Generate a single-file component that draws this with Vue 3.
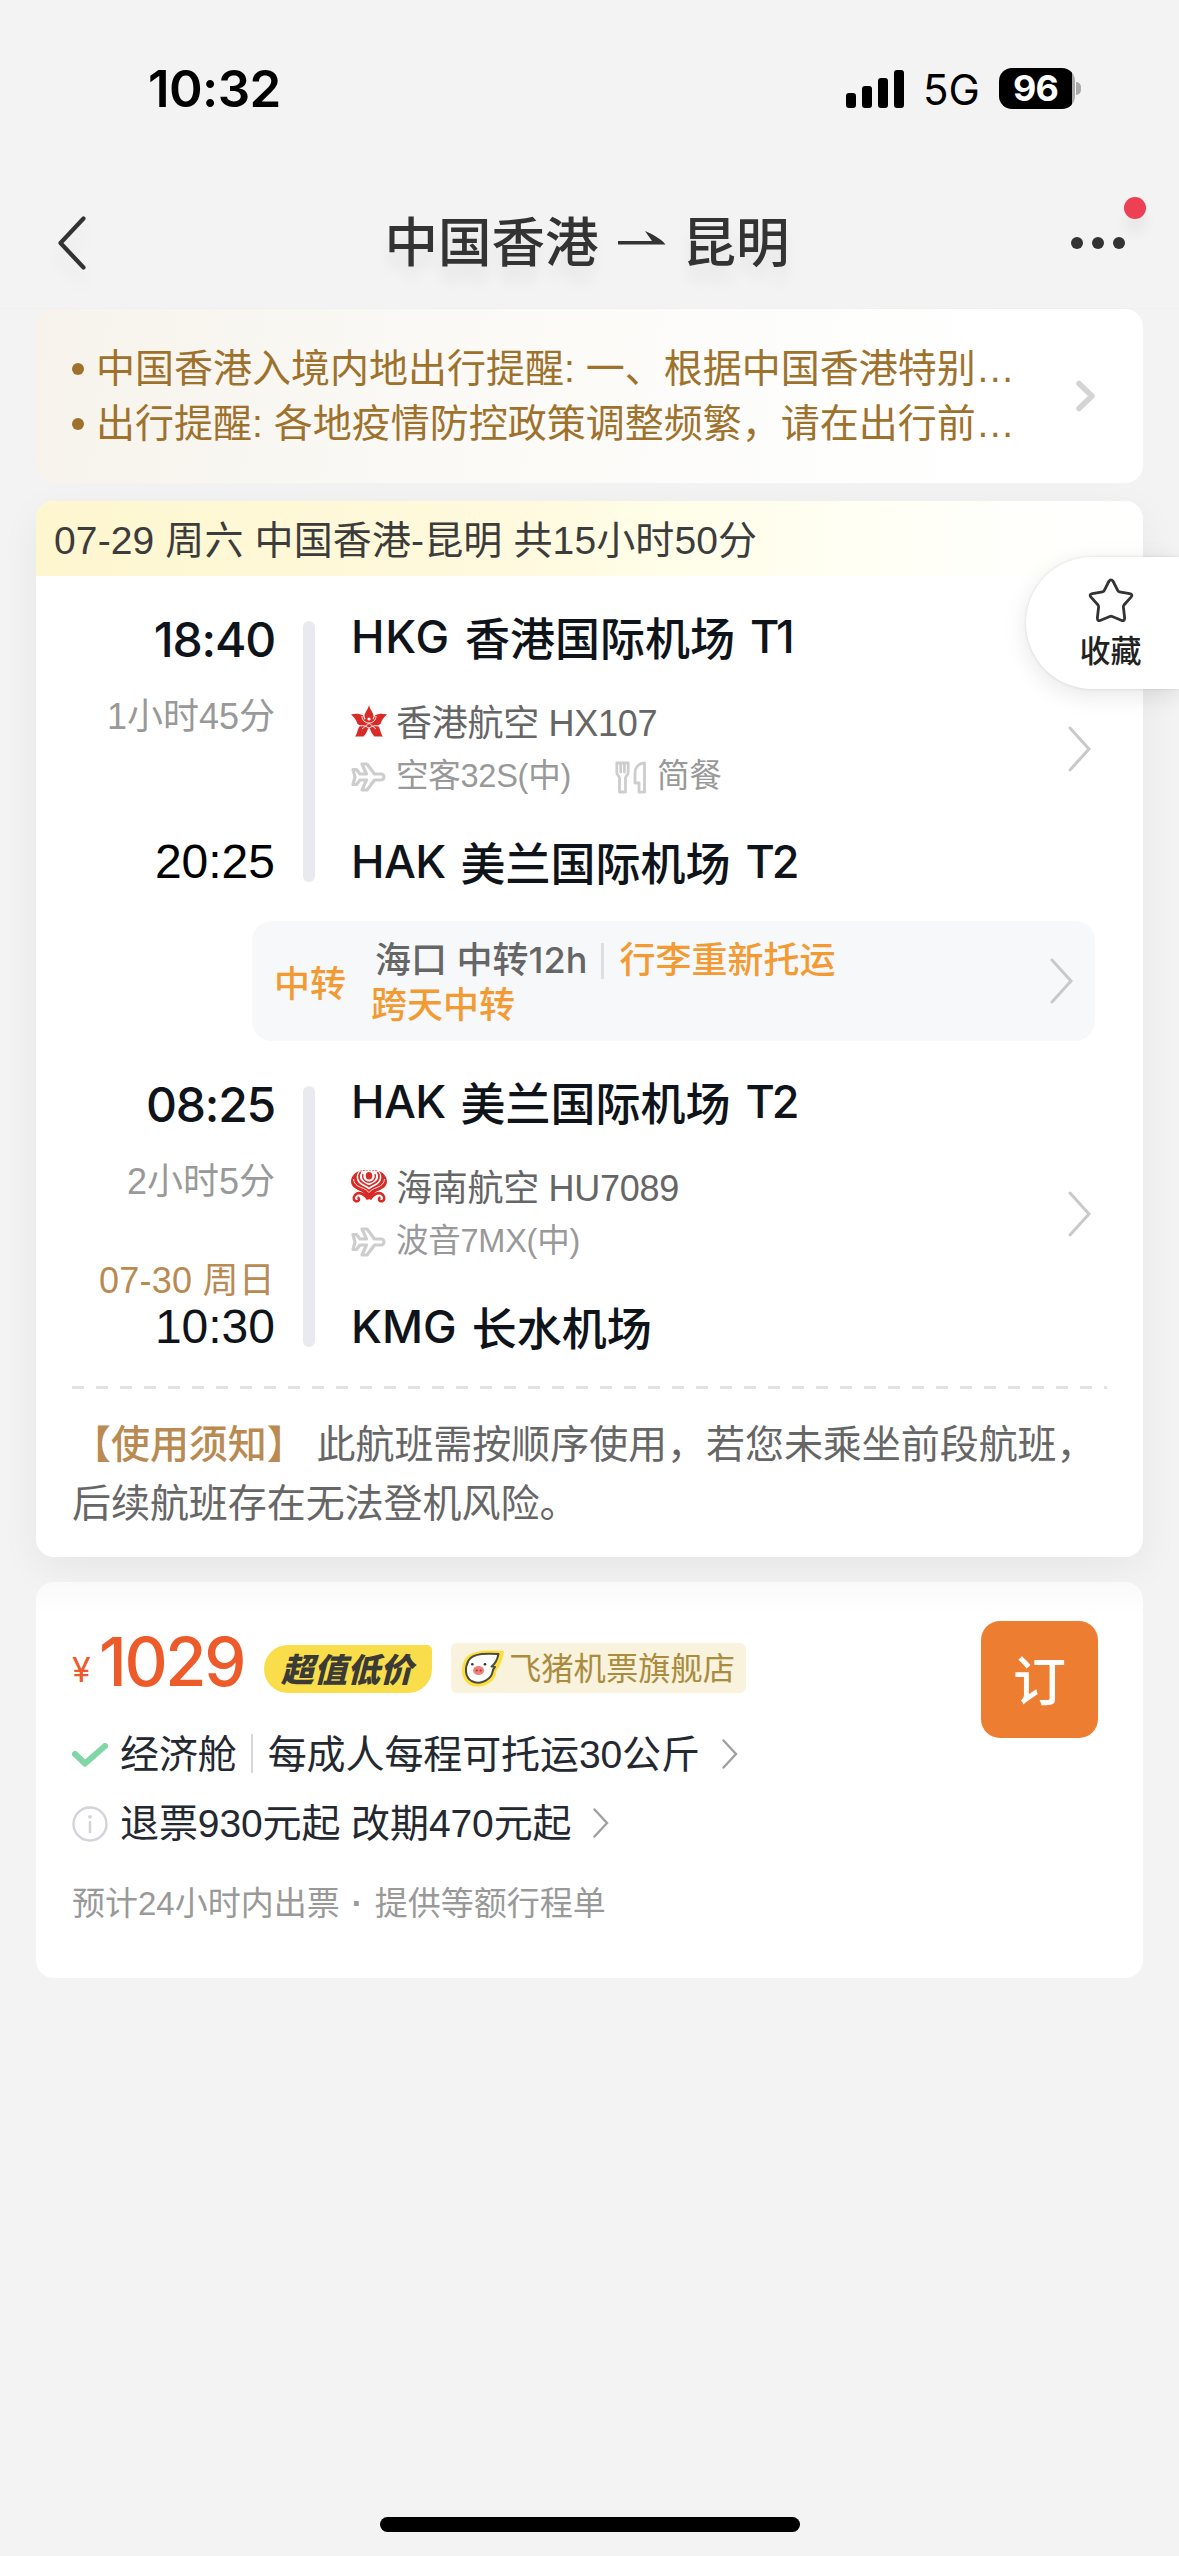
<script setup>
const notices = [
  '中国香港入境内地出行提醒: 一、根据中国香港特别…',
  '出行提醒: 各地疫情防控政策调整频繁，请在出行前…',
]

const legs = [
  {
    id: 'hx',
    depart: '18:40',
    duration: '1小时45分',
    arriveDate: '',
    arrive: '20:25',
    from: { code: 'HKG', name: '香港国际机场', terminal: 'T1' },
    to: { code: 'HAK', name: '美兰国际机场', terminal: 'T2' },
    airline: '香港航空 HX107',
    plane: '空客32S(中)',
    meal: '简餐',
  },
  {
    id: 'hu',
    depart: '08:25',
    duration: '2小时5分',
    arriveDate: '07-30 周日',
    arrive: '10:30',
    from: { code: 'HAK', name: '美兰国际机场', terminal: 'T2' },
    to: { code: 'KMG', name: '长水机场', terminal: '' },
    airline: '海南航空 HU7089',
    plane: '波音7MX(中)',
    meal: '',
  },
]
</script>

<template>
  <div class="screen">
    <header class="status">
      <span class="clock">10:32</span>
      <div class="status-right">
        <svg class="signal" width="58" height="38" viewBox="0 0 58 38">
          <rect x="0" y="23" width="10" height="15" rx="3" />
          <rect x="16" y="16" width="10" height="22" rx="3" />
          <rect x="32" y="8" width="10" height="30" rx="3" />
          <rect x="48" y="0" width="10" height="38" rx="3" />
        </svg>
        <span class="network">5G</span>
        <span class="battery"><span class="level">96</span></span>
        <i class="nub"></i>
      </div>
    </header>

    <nav class="nav">
      <svg class="back" width="30" height="54" viewBox="0 0 30 54">
        <path d="M26.500 2.500L3.500 27l23 24.500" fill="none" stroke="#333" stroke-width="4.200" stroke-linecap="round" stroke-linejoin="round" />
      </svg>
      <h1 class="route">
        <span>中国香港</span>
        <svg width="48" height="14" viewBox="0 0 48 14">
          <path d="M0 10H34L27 0C34 3 43 7.500 47.500 13.500H0z" fill="#333" />
        </svg>
        <span>昆明</span>
      </h1>
      <div class="more"><i></i><i></i><i></i><b class="unread"></b></div>
    </nav>

    <section class="alerts">
      <ul>
        <li v-for="n in notices" :key="n">{{ n }}</li>
      </ul>
      <svg width="20" height="32" viewBox="0 0 20 32">
        <path d="M3 3.500L16 16 3 28.500" fill="none" stroke="#d4d4d4" stroke-width="5.500" stroke-linecap="round" stroke-linejoin="round" />
      </svg>
    </section>

    <section class="trip">
      <div class="trip-head">07-29 周六 中国香港-昆明 共15小时50分</div>

      <template v-for="(leg, i) in legs" :key="leg.id">
        <div v-if="i === 1" class="transfer">
          <span class="transfer-tag">中转</span>
          <div class="transfer-body">
            <div class="transfer-line">
              <span class="city">海口 中转12h</span><i class="sep"></i><span>行李重新托运</span>
            </div>
            <div class="transfer-next">跨天中转</div>
          </div>
          <svg class="chev" width="24" height="46" viewBox="0 0 24 46">
            <path d="M2 2l19 21L2 44" />
          </svg>
        </div>

        <div class="leg" :class="leg.id">
          <div class="times">
            <span class="depart">{{ leg.depart }}</span>
            <span class="duration">{{ leg.duration }}</span>
            <span class="date">{{ leg.arriveDate }}</span>
            <span class="arrive">{{ leg.arrive }}</span>
          </div>
          <i class="track"></i>
          <div class="stops">
            <div class="airport">
              <span class="code" :class="leg.from.code">{{ leg.from.code }}</span><span class="name">{{ leg.from.name }}</span><span class="terminal">{{ leg.from.terminal }}</span>
            </div>
            <div class="airline">
              <svg v-if="leg.id === 'hx'" class="ico" width="36" height="32" viewBox="0 0 36 32">
                <g fill="#d82a26">
                  <path d="M18 0C19 5 23 8 22.500 11.500C22 14 19.500 15 18 16.500C16.500 15 14 14 13.500 11.500C13 8 17 5 18 0Z" />
                  <path d="M0 9.500C4 8.500 9 8.500 12 10.500C13 14 14.500 16.500 17 18C13 21 9 21 6.500 19C5.500 15 3 12 0 9.500Z" />
                  <path d="M36 9.500C32 8.500 27 8.500 24 10.500C23 14 21.500 16.500 19 18C23 21 27 21 29.500 19C30.500 15 33 12 36 9.500Z" />
                  <path d="M17.500 19C17.500 25 15 29 12.500 31.500H4C6.500 29 6 24.500 9 21C12 19 15 19.500 17.500 19Z" />
                  <path d="M18.500 19C18.500 25 21 29 23.500 31.500H32C29.500 29 30 24.500 27 21C24 19 21 19.500 18.500 19Z" />
                  <circle cx="18" cy="18" r="5.500" />
                </g>
                <g fill="none" stroke="#fff" stroke-width="0.900">
                  <path d="M11 11C11 15 14 18 18 18S25 15 25 11" />
                  <path d="M9.500 21C13 20 15 21.500 18 23C21 21.500 23 20 26.500 21" />
                  <path d="M11 24C14 22 16 19 18 18.500C20 19 22 22 25 24" />
                </g>
                <circle cx="18" cy="14" r="1.600" fill="#fff" />
                <path d="M18 23l2 8.500h-4z" fill="#fff" />
              </svg>
              <svg v-else class="ico" width="36" height="33" viewBox="0 0 36 33">
                <g fill="#d82a26">
                  <path d="M8 1C1 4 -1 10 0.500 14C2 18.500 8 20 12 22.500L18 29.500L24 22.500C28 20 34 18.500 35.500 14C37 10 35 4 28 1C31 5 31 9 28.500 12.500C26 15.500 22 16.500 18 19.500C14 16.500 10 15.500 7.500 12.500C5 9 5 5 8 1Z" />
                  <ellipse cx="18" cy="5.800" rx="3.300" ry="3.800" />
                </g>
                <g fill="none" stroke="#d82a26">
                  <path d="M9.500 2C6.500 6 8 11 12 13C14.500 14.300 16.500 15 18 16.500C19.500 15 21.500 14.300 24 13C28 11 29.500 6 26.500 2" stroke-width="1.700" />
                  <path d="M12 4C10.500 9 14 12 18 12.500C22 12 25.500 9 24 4" stroke-width="1.300" />
                  <path d="M9 1.200C14 -0.300 22 -0.300 27 1.200" stroke-width="0.800" stroke-dasharray="2 1" />
                  <path d="M17 29.500C14 24 8 21 4 25C1.500 28 3 31.500 6 31.300C8.500 31 8.500 28 6.500 27.500" stroke-width="2.600" />
                  <path d="M19 29.500C22 24 28 21 32 25C34.500 28 33 31.500 30 31.300C27.500 31 27.500 28 29.500 27.500" stroke-width="2.600" />
                </g>
                <path d="M2.500 9C3 15.500 9 17 12.500 18.500C15 19.700 16.500 20.700 18 22.500C19.500 20.700 21 19.700 23.500 18.500C27 17 33 15.500 33.500 9" fill="none" stroke="#fff" stroke-width="0.900" />
              </svg>
              <span>{{ leg.airline }}</span>
            </div>
            <div class="equip">
              <svg class="ico" width="36" height="30" viewBox="0 0 36 30">
                <path d="M2 7.500h3.500l3.500 4.500h6.500L11 2h5l7.500 10H30a3 3 0 0 1 0 6h-6.500L16 28h-5l4.500-10H9l-3.500 4.500H2L4 15z" fill="none" stroke="#cdcdcd" stroke-width="3.200" stroke-linejoin="round" />
              </svg>
              <span>{{ leg.plane }}</span>
              <template v-if="leg.meal">
                <svg class="meal" width="32" height="33" viewBox="0 0 32 33">
                  <g fill="none" stroke="#cdcdcd" stroke-width="2.800" stroke-linejoin="round" stroke-linecap="round">
                    <path d="M1.800 2v9.500c0 2.500 2.700 3.500 2.700 5.500v14h6V17c0-2 2.700-3 2.700-5.500V2H1.800zM5.700 2v9M9.400 2v9" />
                    <path d="M29.500 1.800v29.400h-5.500V22h-4V12c0-5 3-9.500 9.500-10.200z" />
                  </g>
                </svg>
                <span>{{ leg.meal }}</span>
              </template>
            </div>
            <div class="airport">
              <span class="code" :class="leg.to.code">{{ leg.to.code }}</span><span class="name">{{ leg.to.name }}</span><span class="terminal">{{ leg.to.terminal }}</span>
            </div>
          </div>
          <svg class="chev" width="24" height="46" viewBox="0 0 24 46">
            <path d="M2 2l19 21L2 44" />
          </svg>
        </div>
      </template>

      <div class="dashes"></div>
      <p class="rule"><b>【使用须知】</b> 此航班需按顺序使用，若您未乘坐前段航班，后续航班存在无法登机风险。</p>
    </section>

    <section class="offer">
      <div class="offer-info">
        <div class="price-row">
          <span class="yen">¥</span><span class="price">1029</span>
          <span class="deal">超值低价</span>
          <span class="shop">
            <svg width="44" height="37" viewBox="0 0 44 37">
              <path d="M43 1C30 0 10 -1 4 9C-1 18 0 30 9 35C18 39 30 35 34 27C36 23 34 21 38 17C41 12 42 6 43 1Z" fill="#fbe03c" />
              <path d="M37.500 4C28 3.500 13 2.500 7.500 10.500C3.500 18 4 27 10.500 31C18 35 27 31 30.500 25C32 22 31 20 34 17L30.500 16.500C34 14 36.500 9 37.500 4Z" fill="#fff" stroke="#4c4b43" stroke-width="2" stroke-linejoin="round" />
              <ellipse cx="17.600" cy="20.500" rx="5.500" ry="4.600" fill="#f0807c" />
              <circle cx="15.800" cy="20.500" r="1.100" fill="#a33" />
              <circle cx="19.600" cy="20.500" r="1.100" fill="#a33" />
              <circle cx="11.300" cy="14.300" r="1.300" fill="#333" />
              <circle cx="24" cy="14.300" r="1.300" fill="#333" />
            </svg>
            <span>飞猪机票旗舰店</span>
          </span>
        </div>
        <div class="line cabin">
          <svg class="mark" width="36" height="24" viewBox="0 0 36 24">
            <path d="M3 11L13 20.500 33 3" fill="none" stroke="#80d6a4" stroke-width="6" stroke-linecap="round" stroke-linejoin="round" />
          </svg>
          <span>经济舱</span><i class="sep"></i><span>每成人每程可托运30公斤</span>
          <svg class="mini" width="16" height="30" viewBox="0 0 16 30"><path d="M1.500 1.500L14 15 1.500 28.500" /></svg>
        </div>
        <div class="line refund">
          <svg class="mark" width="36" height="36" viewBox="0 0 36 36">
            <circle cx="18" cy="18" r="16.500" fill="none" stroke="#d3d4db" stroke-width="2.400" />
            <circle cx="18" cy="10.800" r="1.900" fill="#d3d4db" />
            <path d="M18 16v10" stroke="#d3d4db" stroke-width="2.600" stroke-linecap="round" />
          </svg>
          <span>退票930元起 改期470元起</span>
          <svg class="mini" width="16" height="30" viewBox="0 0 16 30"><path d="M1.500 1.500L14 15 1.500 28.500" /></svg>
        </div>
        <div class="foot"><span>预计24小时内出票</span><i>·</i><span>提供等额行程单</span></div>
      </div>
      <button class="book">订</button>
    </section>

    <aside class="fav">
      <svg width="46" height="45" viewBox="0 0 46 45">
        <path d="M20.900 3.300Q23 0.300 25.100 3.300L29.800 12.600Q30.300 13.600 31.500 13.800L41.600 15.600Q45.400 16.400 43 19.200L36 27Q35.200 28 35.400 29.200L36.600 39.600Q36.900 43.700 33.200 42.200L24.200 38.500Q23 38 21.800 38.500L12.800 42.200Q9.100 43.700 9.400 39.600L10.600 29.200Q10.800 28 10 27L3 19.200Q0.600 16.400 4.400 15.600L14.500 13.800Q15.700 13.600 16.200 12.600Z" fill="none" stroke="#333" stroke-width="2.800" />
      </svg>
      <span>收藏</span>
    </aside>

    <div class="home"></div>
  </div>
</template>

<style>
body {
  background: #f3f3f3;
}
</style>

<style scoped>
* {
  box-sizing: border-box;
}
.screen {
  position: relative;
  width: 1179px;
  height: 2556px;
  overflow: hidden;
  display: flex;
  flex-direction: column;
  background: #f3f3f3;
  font-family: "Liberation Sans", "Noto Sans CJK SC", sans-serif;
  color: #0f131a;
  white-space: nowrap;
}
i, b {
  font-style: normal;
}
svg {
  display: block;
  flex: none;
}

.status {
  height: 177px;
  padding: 0 98px 0 148px;
  display: flex;
  align-items: center;
  justify-content: space-between;
  font-family: Inter, sans-serif;
  color: #000;
}
.clock {
  font-size: 51px;
  font-weight: 600;
  letter-spacing: -0.6px;
}
.status-right {
  display: flex;
  align-items: center;
}
.network {
  margin-left: 19px;
  width: 76px;
  font-size: 42px;
  padding-top: 2px;
}
.battery {
  width: 76px;
  height: 41px;
  border-radius: 13px;
  background: linear-gradient(90deg, #000 73px, #a9a9a9 73px);
}
.level {
  display: block;
  width: 73px;
  height: 41px;
  border-radius: 13px 11px 11px 13px;
  line-height: 41px;
  text-align: center;
  color: #fff;
  font-size: 36px;
  font-weight: 700;
  letter-spacing: -1px;
}
.nub {
  width: 5px;
  height: 13px;
  margin-left: 1px;
  border-radius: 0 6px 6px 0;
  background: #a9a9a9;
}

.nav {
  height: 132px;
  padding: 0 54px 0 57px;
  display: flex;
  align-items: center;
  justify-content: space-between;
  border-bottom: 1px solid #f0f0f0;
}
.back {
  filter: drop-shadow(0 14px 8px rgba(0, 0, 0, 0.05));
}
.route {
  margin: -7px 0 0 16px;
  display: flex;
  align-items: center;
  font-family: "Noto Sans CJK SC", sans-serif;
  font-size: 53.5px;
  line-height: 70px;
  font-weight: 500;
  color: #333;
  text-shadow: 0 16px 14px rgba(0, 0, 0, 0.06);
}
.route svg {
  margin: -3px 17px 0 19px;
}
.more {
  position: relative;
  display: flex;
  gap: 9px;
}
.more i {
  width: 12px;
  height: 12px;
  border-radius: 50%;
  background: #333;
}
.unread {
  position: absolute;
  right: -21px;
  top: -40px;
  width: 22px;
  height: 22px;
  border-radius: 50%;
  background: #ec4055;
  box-shadow: 0 14px 14px rgba(0, 0, 0, 0.05);
}

.alerts {
  height: 174px;
  margin: 0 36px;
  padding: 0 47px 0 0;
  display: flex;
  align-items: center;
  justify-content: space-between;
  border-radius: 18px;
  background: linear-gradient(97deg, #f7f3ec, #faf9f5 35%, #fff 85%);
}
.alerts ul {
  margin: 0;
  padding: 0 0 0 36px;
  list-style: none;
}
.alerts li {
  display: flex;
  align-items: center;
  font-size: 39px;
  line-height: 55px;
  color: #9e722c;
}
.alerts li::before {
  content: "";
  width: 12px;
  height: 12px;
  margin: 0 12px 0 0;
  border-radius: 50%;
  background: #9e722c;
}

.trip {
  height: 1056px;
  margin: 18px 36px 0;
  border-radius: 18px;
  background: #fff;
  box-shadow: 0 12px 42px rgba(0, 0, 0, 0.055);
}
.trip-head {
  height: 75px;
  padding-left: 18px;
  border-radius: 18px 18px 0 0;
  background: linear-gradient(90deg, #fdf6cf, #fffadf 45%, #fffee9 58%, #fffffa 85%, #fff);
  font-size: 39px;
  line-height: 80px;
  letter-spacing: 0.13px;
  color: #3c3c3c;
}
.leg {
  height: 269px;
  margin-top: 40px;
  padding-right: 51px;
  display: flex;
}
.times {
  width: 239px;
  display: flex;
  flex-direction: column;
  align-items: flex-end;
}
.depart {
  height: 47px;
  font: 500 48px/47px Inter, sans-serif;
  letter-spacing: -1.2px;
}
.duration {
  margin-top: 33px;
  font-size: 36px;
  line-height: 42px;
  color: #999;
}
.date {
  margin-top: auto;
  font-size: 36px;
  line-height: 44px;
  letter-spacing: 0.25px;
  color: #b98a52;
}
.arrive {
  font-size: 48px;
  line-height: 48px;
  height: 47px;
}
.hx .arrive {
  color: #000;
}
.track {
  width: 12px;
  margin: 5px 36px 3px 28px;
  border-radius: 6px;
  background: #e9eaf0;
}
.stops {
  flex: 1;
}
.airport {
  display: flex;
  height: 44px;
  font-size: 45px;
  line-height: 42px;
  font-weight: 500;
}
.code {
  font-family: Inter, sans-serif;
  letter-spacing: -0.6px;
}
.code.HKG {
  letter-spacing: 0.8px;
}
.code.KMG {
  letter-spacing: 0;
}
.terminal {
  font-family: Inter, sans-serif;
  letter-spacing: -3.2px;
}
.name {
  font-family: "Noto Sans CJK SC", sans-serif;
  margin: 0 15px;
}
.airline {
  display: flex;
  align-items: center;
  height: 40px;
  margin: 44px 0 13px;
  font-size: 36px;
  line-height: 40px;
  letter-spacing: -0.28px;
  color: #666;
}
.airline span {
  padding-bottom: 1px;
}
.equip {
  display: flex;
  align-items: center;
  height: 40px;
  margin-bottom: 44px;
  font-size: 32.5px;
  line-height: 40px;
  letter-spacing: -0.25px;
  color: #999;
}
.equip span {
  padding-bottom: 2px;
}
.ico {
  margin-right: 9px;
}
.airline .ico {
  margin-bottom: 6px;
}
.meal {
  margin: 0 10px 0 44px;
}
.chev {
  align-self: center;
}
.leg > .chev {
  margin-bottom: 4px;
}
.chev path {
  fill: none;
  stroke: #c9c9c9;
  stroke-width: 3;
  stroke-linecap: round;
}
.transfer {
  height: 120px;
  margin: 36px 48px 0 216px;
  padding: 0 21px 0 22px;
  display: flex;
  align-items: center;
  border-radius: 20px;
  background: #f6f8fa;
  font-family: Inter, "Noto Sans CJK SC", sans-serif;
  font-size: 36px;
  font-weight: 500;
  color: #f39a33;
}
.transfer-tag {
  width: 97px;
}
.transfer-body {
  flex: 1;
  padding-top: 4px;
  line-height: 45px;
}
.transfer-line {
  display: flex;
  align-items: center;
  padding-left: 4px;
}
.city {
  color: #666;
}
.transfer .sep {
  width: 3px;
  height: 36px;
  margin: 0 15px 0 14px;
  background: #dedede;
}
.dashes {
  height: 3px;
  margin: 36px 36px 0;
  background: repeating-linear-gradient(90deg, #e2e2e2 0 12px, transparent 12px 24px);
}
.rule {
  margin: 26px 36px 0;
  font-size: 39px;
  line-height: 59px;
  letter-spacing: -0.05px;
  color: #666;
  white-space: normal;
}
.rule b {
  font-weight: 500;
  color: #b98a52;
}

.offer {
  height: 396px;
  margin: 25px 36px 0;
  padding: 39px 45px 0 36px;
  display: flex;
  justify-content: space-between;
  align-items: flex-start;
  border-radius: 18px;
  background: linear-gradient(#fafafa, #fff 36px);
}
.price-row {
  display: flex;
  align-items: flex-start;
  height: 96px;
  font-family: Inter, sans-serif;
  color: #ec5b29;
}
.yen {
  width: 27px;
  font-size: 34px;
  line-height: 40px;
  padding-top: 29px;
}
.price {
  width: 165px;
  padding-top: 1px;
  font-size: 67px;
  font-weight: 500;
  line-height: 80px;
  letter-spacing: -2.4px;
}
.deal {
  width: 168px;
  height: 48px;
  margin: 24px 19px 0 0;
  padding-right: 2px;
  border-radius: 24px 5px 24px 24px;
  background: #f9dd4a;
  text-align: center;
  font: italic 900 33px/47px "Noto Sans CJK SC", sans-serif;
  color: #3a3a36;
}
.shop {
  width: 295px;
  height: 50px;
  margin-top: 22px;
  padding-left: 10px;
  display: flex;
  align-items: center;
  gap: 4px;
  border-radius: 6px;
  background: #f9f2dc;
  font: 32.3px/50px "Noto Sans CJK SC", sans-serif;
  color: #a98c3e;
}
.shop span {
  padding-bottom: 4px;
}
.line {
  display: flex;
  align-items: center;
  height: 68px;
  font-size: 39px;
  letter-spacing: -0.1px;
  color: #242830;
}
.refund {
  height: 70px;
}
.mark {
  margin: 7px 12px 0 0;
}
.line .sep {
  width: 2px;
  height: 39px;
  margin: 5px 15px 0 14px;
  background: #d8d8d8;
}
.mini {
  margin: 5px 0 0 22px;
}
.mini path {
  fill: none;
  stroke: #a0a0a0;
  stroke-width: 2.4;
  stroke-linecap: round;
}
.foot {
  display: flex;
  margin-top: 25px;
  font-size: 33px;
  line-height: 48px;
  color: #999;
}
.foot i {
  width: 35px;
  text-align: center;
  font-weight: 700;
}
.book {
  width: 117px;
  height: 117px;
  padding: 0 0 2px;
  border: 0;
  border-radius: 19px;
  background: #ed7d31;
  font: 500 53px/115px "Noto Sans CJK SC", sans-serif;
  color: #fff;
}

.fav {
  position: absolute;
  right: 0;
  top: 557px;
  width: 153px;
  height: 132px;
  padding: 21px 0 0 16px;
  display: flex;
  flex-direction: column;
  align-items: center;
  gap: 4px;
  border-radius: 66px 0 0 66px;
  background: #fff;
  box-shadow: 0 6px 24px rgba(0, 0, 0, 0.1), 0 0 3px rgba(0, 0, 0, 0.12);
}
.fav span {
  font: 500 31px/44px "Noto Sans CJK SC", sans-serif;
  color: #222;
}
.home {
  position: absolute;
  left: 380px;
  top: 2517px;
  width: 420px;
  height: 15px;
  border-radius: 8px;
  background: #000;
}
</style>
